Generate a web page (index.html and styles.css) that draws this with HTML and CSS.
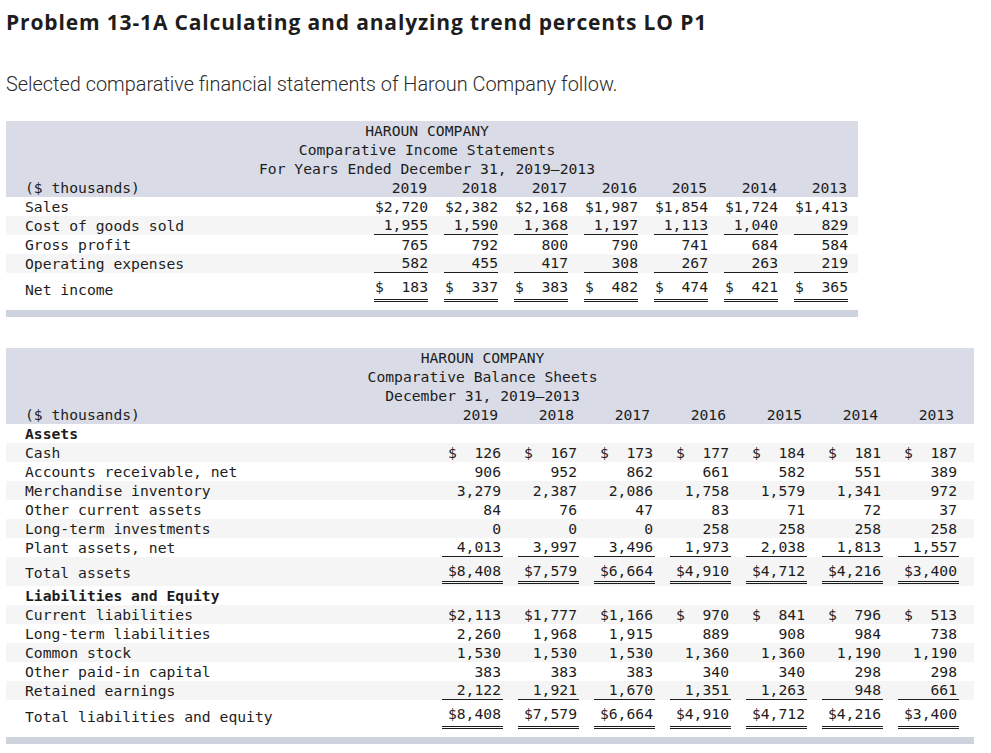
FILE: index.html
```html
<!DOCTYPE html>
<html lang="en">
<head>
<meta charset="utf-8">
<title>Problem 13-1A</title>
<link rel="stylesheet" href="styles.css">
</head>
<body>
<h1 class="title">Problem 13-1A Calculating and analyzing trend percents LO P1</h1>
<p class="intro">Selected comparative financial statements of Haroun Company follow.</p>

<div class="statement statement-income">
<table class="fs fs-income">
<colgroup><col class="c-label"><col class="c-num"><col class="c-num"><col class="c-num"><col class="c-num"><col class="c-num"><col class="c-num"><col class="c-last"></colgroup>
<thead>
<tr><th colspan="8" class="caption">HAROUN COMPANY</th></tr>
<tr><th colspan="8" class="caption">Comparative Income Statements</th></tr>
<tr><th colspan="8" class="caption">For Years Ended December 31, 2019–2013</th></tr>
<tr class="years"><th class="label">($ thousands)</th><th><span class="yr">2019</span></th><th><span class="yr">2018</span></th><th><span class="yr">2017</span></th><th><span class="yr">2016</span></th><th><span class="yr">2015</span></th><th><span class="yr">2014</span></th><th><span class="yr">2013</span></th></tr>
</thead>
<tbody>
<tr><td class="label">Sales</td><td><span class="amt">$2,720</span></td><td><span class="amt">$2,382</span></td><td><span class="amt">$2,168</span></td><td><span class="amt">$1,987</span></td><td><span class="amt">$1,854</span></td><td><span class="amt">$1,724</span></td><td><span class="amt">$1,413</span></td></tr>
<tr class="ul"><td class="label">Cost of goods sold</td><td><span class="amt">1,955</span></td><td><span class="amt">1,590</span></td><td><span class="amt">1,368</span></td><td><span class="amt">1,197</span></td><td><span class="amt">1,113</span></td><td><span class="amt">1,040</span></td><td><span class="amt">829</span></td></tr>
<tr><td class="label">Gross profit</td><td><span class="amt">765</span></td><td><span class="amt">792</span></td><td><span class="amt">800</span></td><td><span class="amt">790</span></td><td><span class="amt">741</span></td><td><span class="amt">684</span></td><td><span class="amt">584</span></td></tr>
<tr class="ul"><td class="label">Operating expenses</td><td><span class="amt">582</span></td><td><span class="amt">455</span></td><td><span class="amt">417</span></td><td><span class="amt">308</span></td><td><span class="amt">267</span></td><td><span class="amt">263</span></td><td><span class="amt">219</span></td></tr>
<tr class="dbl net"><td class="label">Net income</td><td><span class="amt">$  183</span></td><td><span class="amt">$  337</span></td><td><span class="amt">$  383</span></td><td><span class="amt">$  482</span></td><td><span class="amt">$  474</span></td><td><span class="amt">$  421</span></td><td><span class="amt">$  365</span></td></tr>
</tbody>
</table>
</div>

<div class="statement statement-balance">
<table class="fs fs-balance">
<colgroup><col class="c-label"><col class="c-num"><col class="c-num"><col class="c-num"><col class="c-num"><col class="c-num"><col class="c-num"><col class="c-last"></colgroup>
<thead>
<tr><th colspan="8" class="caption">HAROUN COMPANY</th></tr>
<tr><th colspan="8" class="caption">Comparative Balance Sheets</th></tr>
<tr><th colspan="8" class="caption">December 31, 2019–2013</th></tr>
<tr class="years"><th class="label">($ thousands)</th><th><span class="yr">2019</span></th><th><span class="yr">2018</span></th><th><span class="yr">2017</span></th><th><span class="yr">2016</span></th><th><span class="yr">2015</span></th><th><span class="yr">2014</span></th><th><span class="yr">2013</span></th></tr>
</thead>
<tbody>
<tr class="section"><td class="label" colspan="8">Assets</td></tr>
<tr><td class="label">Cash</td><td><span class="amt">$  126</span></td><td><span class="amt">$  167</span></td><td><span class="amt">$  173</span></td><td><span class="amt">$  177</span></td><td><span class="amt">$  184</span></td><td><span class="amt">$  181</span></td><td><span class="amt">$  187</span></td></tr>
<tr><td class="label">Accounts receivable, net</td><td><span class="amt">906</span></td><td><span class="amt">952</span></td><td><span class="amt">862</span></td><td><span class="amt">661</span></td><td><span class="amt">582</span></td><td><span class="amt">551</span></td><td><span class="amt">389</span></td></tr>
<tr><td class="label">Merchandise inventory</td><td><span class="amt">3,279</span></td><td><span class="amt">2,387</span></td><td><span class="amt">2,086</span></td><td><span class="amt">1,758</span></td><td><span class="amt">1,579</span></td><td><span class="amt">1,341</span></td><td><span class="amt">972</span></td></tr>
<tr><td class="label">Other current assets</td><td><span class="amt">84</span></td><td><span class="amt">76</span></td><td><span class="amt">47</span></td><td><span class="amt">83</span></td><td><span class="amt">71</span></td><td><span class="amt">72</span></td><td><span class="amt">37</span></td></tr>
<tr><td class="label">Long-term investments</td><td><span class="amt">0</span></td><td><span class="amt">0</span></td><td><span class="amt">0</span></td><td><span class="amt">258</span></td><td><span class="amt">258</span></td><td><span class="amt">258</span></td><td><span class="amt">258</span></td></tr>
<tr class="ul"><td class="label">Plant assets, net</td><td><span class="amt">4,013</span></td><td><span class="amt">3,997</span></td><td><span class="amt">3,496</span></td><td><span class="amt">1,973</span></td><td><span class="amt">2,038</span></td><td><span class="amt">1,813</span></td><td><span class="amt">1,557</span></td></tr>
<tr class="dbl subtotal"><td class="label">Total assets</td><td><span class="amt">$8,408</span></td><td><span class="amt">$7,579</span></td><td><span class="amt">$6,664</span></td><td><span class="amt">$4,910</span></td><td><span class="amt">$4,712</span></td><td><span class="amt">$4,216</span></td><td><span class="amt">$3,400</span></td></tr>
<tr class="section"><td class="label" colspan="8">Liabilities and Equity</td></tr>
<tr><td class="label">Current liabilities</td><td><span class="amt">$2,113</span></td><td><span class="amt">$1,777</span></td><td><span class="amt">$1,166</span></td><td><span class="amt">$  970</span></td><td><span class="amt">$  841</span></td><td><span class="amt">$  796</span></td><td><span class="amt">$  513</span></td></tr>
<tr><td class="label">Long-term liabilities</td><td><span class="amt">2,260</span></td><td><span class="amt">1,968</span></td><td><span class="amt">1,915</span></td><td><span class="amt">889</span></td><td><span class="amt">908</span></td><td><span class="amt">984</span></td><td><span class="amt">738</span></td></tr>
<tr><td class="label">Common stock</td><td><span class="amt">1,530</span></td><td><span class="amt">1,530</span></td><td><span class="amt">1,530</span></td><td><span class="amt">1,360</span></td><td><span class="amt">1,360</span></td><td><span class="amt">1,190</span></td><td><span class="amt">1,190</span></td></tr>
<tr><td class="label">Other paid-in capital</td><td><span class="amt">383</span></td><td><span class="amt">383</span></td><td><span class="amt">383</span></td><td><span class="amt">340</span></td><td><span class="amt">340</span></td><td><span class="amt">298</span></td><td><span class="amt">298</span></td></tr>
<tr class="ul"><td class="label">Retained earnings</td><td><span class="amt">2,122</span></td><td><span class="amt">1,921</span></td><td><span class="amt">1,670</span></td><td><span class="amt">1,351</span></td><td><span class="amt">1,263</span></td><td><span class="amt">948</span></td><td><span class="amt">661</span></td></tr>
<tr class="dbl net"><td class="label">Total liabilities and equity</td><td><span class="amt">$8,408</span></td><td><span class="amt">$7,579</span></td><td><span class="amt">$6,664</span></td><td><span class="amt">$4,910</span></td><td><span class="amt">$4,712</span></td><td><span class="amt">$4,216</span></td><td><span class="amt">$3,400</span></td></tr>
</tbody>
</table>
</div>
</body>
</html>
```

FILE: styles.css
```css
* { box-sizing: border-box; }

body {
  margin: 0;
  padding: 0 6px;
  background: #ffffff;
  color: #1d1d1d;
  font-family: "Roboto", "Liberation Sans", sans-serif;
}

.title {
  margin: 10px 0 0;
  font-family: "Open Sans", "Roboto", sans-serif;
  font-size: 21px;
  line-height: 24px;
  font-weight: 700;
  letter-spacing: 0.85px;
  color: #1d1d1d;
}

.intro {
  margin: 39px 0 0;
  font-size: 19.9px;
  line-height: 24px;
  font-weight: 300;
  color: #2a2a2a;
}

.statement {
  border-bottom: 7px solid #cdd2dd;
  padding-bottom: 8px;
}

.statement-income {
  width: 852px;
  margin-top: 24px;
  margin-bottom: 31px;
}

.statement-balance {
  width: 968px;
}

.fs {
  width: 100%;
  border-collapse: collapse;
  table-layout: fixed;
  font-family: "DejaVu Sans Mono", "Liberation Mono", monospace;
  font-size: 14.7px;
  line-height: 19px;
  color: #1d1d1d;
}

.fs thead { background: #d9dce6; }

.fs th {
  font-weight: normal;
}

.fs th,
.fs td {
  padding: 0 0 0 16px;
  text-align: right;
  white-space: pre;
}

.fs .caption {
  padding: 0;
  text-align: center;
}

.fs .label {
  padding-left: 19px;
  text-align: left;
}

.fs tbody tr:nth-child(even) { background: #f5f5f5; }

.fs .section .label { font-weight: 700; }

.amt,
.yr { display: block; }

.ul .amt {
  line-height: 18px;
  border-bottom: 1px solid #1d1d1d;
}

.dbl .amt {
  border-bottom: 3px double #1d1d1d;
}

/* income statement columns */
.fs-income .c-label { width: 352px; }
.fs-income .c-num { width: 70px; }
.fs-income .c-last { width: 80px; }
.fs-income th:last-child,
.fs-income td:last-child { padding-right: 10px; }
.fs-income .caption { padding: 0; }
.fs-income .yr { padding-right: 1px; }

.fs-income .net td { padding-top: 4px; }
.fs-income .net .amt { padding-bottom: 3px; }

/* balance sheet columns */
.fs-balance .c-label { width: 421px; }
.fs-balance .c-num { width: 76px; }
.fs-balance .c-last { width: 91px; }
.fs-balance th,
.fs-balance td { padding-left: 15px; }
.fs-balance th:last-child,
.fs-balance td:last-child { padding-right: 15px; }
.fs-balance .caption { padding: 0; }
.fs-balance .label { padding-left: 19px; }
.fs-balance .amt { padding-right: 2px; }
.fs-balance .yr { padding-right: 5px; }

.fs-balance .subtotal td { padding-top: 4px; padding-bottom: 2px; }
.fs-balance .subtotal .amt { padding-bottom: 1px; }
.fs-balance .net td { padding-top: 4px; }
.fs-balance .net .amt { padding-bottom: 3px; }
```
